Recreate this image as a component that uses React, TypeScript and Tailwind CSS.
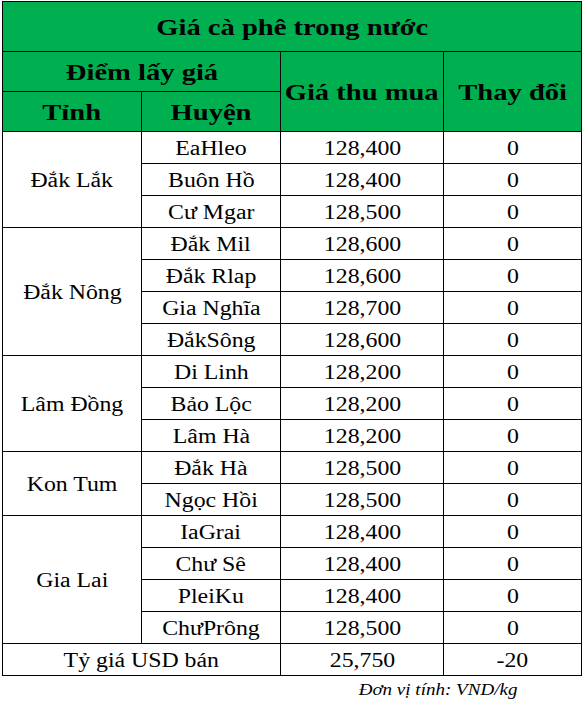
import React from 'react';

type Province = { name: string; rows: { district: string; price: string; change: string }[] };

const provinces: Province[] = [
  {
    name: 'Đắk Lắk',
    rows: [
      { district: 'EaHleo', price: '128,400', change: '0' },
      { district: 'Buôn Hồ', price: '128,400', change: '0' },
      { district: 'Cư Mgar', price: '128,500', change: '0' },
    ],
  },
  {
    name: 'Đắk Nông',
    rows: [
      { district: 'Đắk Mil', price: '128,600', change: '0' },
      { district: 'Đắk Rlap', price: '128,600', change: '0' },
      { district: 'Gia Nghĩa', price: '128,700', change: '0' },
      { district: 'ĐắkSông', price: '128,600', change: '0' },
    ],
  },
  {
    name: 'Lâm Đồng',
    rows: [
      { district: 'Di Linh', price: '128,200', change: '0' },
      { district: 'Bảo Lộc', price: '128,200', change: '0' },
      { district: 'Lâm Hà', price: '128,200', change: '0' },
    ],
  },
  {
    name: 'Kon Tum',
    rows: [
      { district: 'Đắk Hà', price: '128,500', change: '0' },
      { district: 'Ngọc Hồi', price: '128,500', change: '0' },
    ],
  },
  {
    name: 'Gia Lai',
    rows: [
      { district: 'IaGrai', price: '128,400', change: '0' },
      { district: 'Chư Sê', price: '128,400', change: '0' },
      { district: 'PleiKu', price: '128,400', change: '0' },
      { district: 'ChưPrông', price: '128,500', change: '0' },
    ],
  },
];

// text in the source image is stretched horizontally, so widen glyphs a bit
function T({ children }: { children: React.ReactNode }) {
  return <span className="inline-block scale-x-[1.19] whitespace-nowrap">{children}</span>;
}

const cell = 'border border-black text-center align-middle p-0';
const head = 'border border-black text-center align-middle p-0 bg-[#00b050] font-bold text-[24px] leading-none';

export default function App() {
  return (
    <div className="bg-white w-[583px] h-[710px] pt-px pl-[2px] font-['Liberation_Serif','Times_New_Roman',serif] text-black">
      <table className="w-[579px] table-fixed border-collapse">
        <colgroup>
          <col className="w-[139px]" />
          <col className="w-[139px]" />
          <col className="w-[163px]" />
          <col className="w-[138px]" />
        </colgroup>
        <thead>
          <tr className="h-[50px]">
            <th colSpan={4} className={head}>
              <T>Giá cà phê trong nước</T>
            </th>
          </tr>
          <tr className="h-[40px]">
            <th colSpan={2} className={head}>
              <T>Điểm lấy giá</T>
            </th>
            <th rowSpan={2} className={head}>
              <T>Giá thu mua</T>
            </th>
            <th rowSpan={2} className={head}>
              <T>Thay đổi</T>
            </th>
          </tr>
          <tr className="h-[40px]">
            <th className={head}>
              <T>Tỉnh</T>
            </th>
            <th className={head}>
              <T>Huyện</T>
            </th>
          </tr>
        </thead>
        <tbody className="text-[20px] leading-none">
          {provinces.map((p) =>
            p.rows.map((r, i) => (
              <tr key={p.name + r.district} className="h-[32px]">
                {i === 0 && (
                  <td rowSpan={p.rows.length} className={cell}>
                    <T>{p.name}</T>
                  </td>
                )}
                <td className={cell}>
                  <T>{r.district}</T>
                </td>
                <td className={cell}>
                  <T>{r.price}</T>
                </td>
                <td className={cell}>
                  <T>{r.change}</T>
                </td>
              </tr>
            ))
          )}
          <tr className="h-[32px]">
            <td colSpan={2} className={cell}>
              <T>Tỷ giá USD bán</T>
            </td>
            <td className={cell}>
              <T>25,750</T>
            </td>
            <td className={cell}>
              <T>-20</T>
            </td>
          </tr>
        </tbody>
      </table>
      <div className="flex justify-end pr-[66px] pt-[6px] text-[16px] italic leading-none">
        <span className="inline-block scale-x-[1.19] origin-right whitespace-nowrap">Đơn vị tính: VND/kg</span>
      </div>
    </div>
  );
}
